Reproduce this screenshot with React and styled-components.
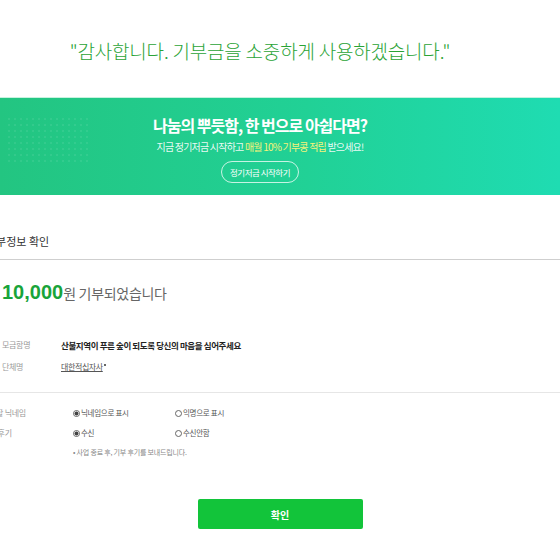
import React from "react";
import styled, { createGlobalStyle } from "styled-components";

const GlobalStyle = createGlobalStyle`
  body {
    margin: 0;
    background: #fff;
    font-family: "Noto Sans CJK KR", "Noto Sans", sans-serif;
  }
`;

const Page = styled.div`
  width: 560px;
  height: 560px;
  overflow: hidden;
  display: flex;
  flex-direction: column;
`;

const Thanks = styled.div`
  height: 97px;
  padding: 3px 40px 0 0;
  box-sizing: border-box;
  display: flex;
  align-items: center;
  justify-content: center;
  font-size: 19px;
  font-weight: 300;
  letter-spacing: -0.2px;
  color: #2aa336;
`;

const Banner = styled.div`
  position: relative;
  height: 98px;
  box-sizing: border-box;
  padding: 17px 40px 0 0;
  border-top: 1px solid #c6f3df;
  background: linear-gradient(90deg, #23c581 0%, #21d196 55%, #1fdcb2 100%);
  display: flex;
  flex-direction: column;
  align-items: center;
  color: #fff;

  &::before {
    content: "";
    position: absolute;
    left: 6px;
    top: 18px;
    width: 84px;
    height: 46px;
    background-image: radial-gradient(rgba(255, 255, 255, 0.07) 1px, transparent 1.4px);
    background-size: 6px 6px;
  }
`;

const BannerTitle = styled.div`
  font-size: 16px;
  line-height: 20px;
  font-weight: 700;
  letter-spacing: -1px;
`;

const BannerSub = styled.div`
  margin-top: 5px;
  font-size: 10px;
  line-height: 14px;
  letter-spacing: -0.8px;
  color: rgba(255, 255, 255, 0.92);
`;

const Highlight = styled.span`
  color: #f6f37a;
`;

const BannerButton = styled.button`
  margin-top: 7px;
  width: 78px;
  height: 22px;
  border: 1px solid rgba(255, 255, 255, 0.75);
  border-radius: 11px;
  background: transparent;
  color: #fff;
  font-family: inherit;
  font-size: 8.5px;
  letter-spacing: -0.5px;
  padding: 0;
`;

const Content = styled.div`
  margin-left: -18px;
  width: 600px;
  display: flex;
  flex-direction: column;
`;

const SectionHead = styled.div`
  padding: 39px 0 11px 4px;
  line-height: 14px;
  font-size: 11px;
  color: #333;
  border-bottom: 1px solid #cfcfcf;
`;

const Amount = styled.div`
  margin-top: 20px;
  padding-left: 20px;
  line-height: 24px;
  display: flex;
  align-items: baseline;
`;

const Money = styled.span`
  font-family: "Liberation Sans", Arial, sans-serif;
  font-weight: 700;
  font-size: 20px;
  color: #19a43a;
`;

const AmountText = styled.span`
  font-size: 14px;
  letter-spacing: -0.3px;
  color: #666;
`;

const InfoList = styled.div`
  margin-top: 33px;
  padding: 0 0 18px 20px;
  display: flex;
  flex-direction: column;
  gap: 8px;
  border-bottom: 1px solid #e6e6e6;
`;

const Row = styled.div`
  display: flex;
  align-items: center;
  height: 14px;
  line-height: 14px;
`;

const Label = styled.div`
  width: ${(p) => p.$w}px;
  flex-shrink: 0;
  font-size: 8px;
  letter-spacing: -0.3px;
  color: #999;
`;

const Value = styled.div`
  font-size: 8.5px;
  font-weight: 700;
  letter-spacing: -0.4px;
  color: #222;
`;

const OrgLink = styled.a`
  font-size: 8px;
  letter-spacing: -0.4px;
  color: #555;
  text-decoration: underline;
`;

const Arrow = styled.span`
  margin: 0 0 4px 1px;
  width: 2px;
  height: 2px;
  border-radius: 50%;
  background: #333;
`;

const Options = styled.div`
  padding-top: 13px;
  display: flex;
  flex-direction: column;
  gap: 6px;
`;

const Option = styled.label`
  width: ${(p) => p.$w || 102}px;
  display: flex;
  align-items: center;
  font-size: 7.5px;
  letter-spacing: -0.3px;
  color: #555;
`;

const Radio = styled.span`
  width: 7px;
  height: 7px;
  box-sizing: border-box;
  border-radius: 50%;
  border: 1px solid #666;
  margin-right: 1px;
  flex-shrink: 0;
  background: ${(p) => (p.$on ? "radial-gradient(#444 0 1.8px, #fff 2.2px)" : "#fff")};
`;

const Note = styled.div`
  padding-left: 91px;
  line-height: 12px;
  font-size: 7px;
  letter-spacing: -0.2px;
  color: #888;
`;

const Footer = styled.div`
  margin-top: 41px;
  display: flex;
  justify-content: center;
`;

const Confirm = styled.button`
  width: 165px;
  height: 30px;
  border: 0;
  border-radius: 2px;
  background: #12c43a;
  color: #fff;
  font-family: inherit;
  font-size: 10px;
  font-weight: 700;
`;

export default function App() {
  return (
    <Page>
      <GlobalStyle />
      <Thanks>"감사합니다. 기부금을 소중하게 사용하겠습니다."</Thanks>
      <Banner>
        <BannerTitle>나눔의 뿌듯함, 한 번으로 아쉽다면?</BannerTitle>
        <BannerSub>
          지금 정기저금 시작하고 <Highlight>매월 10% 기부콩 적립</Highlight> 받으세요!
        </BannerSub>
        <BannerButton>정기저금 시작하기</BannerButton>
      </Banner>
      <Content>
        <SectionHead>기부정보 확인</SectionHead>
        <Amount>
          <Money>10,000</Money>
          <AmountText>원 기부되었습니다</AmountText>
        </Amount>
        <InfoList>
          <Row>
            <Label $w={59}>모금함명</Label>
            <Value>산불지역이 푸른 숲이 되도록 당신의 마음을 심어주세요</Value>
          </Row>
          <Row>
            <Label $w={59}>단체명</Label>
            <OrgLink>대한적십자사</OrgLink>
            <Arrow />
          </Row>
        </InfoList>
        <Options>
          <Row>
            <Label $w={91}>표시할 닉네임</Label>
            <Option>
              <Radio $on />
              닉네임으로 표시
            </Option>
            <Option>
              <Radio />
              익명으로 표시
            </Option>
          </Row>
          <Row>
            <Label $w={91}>기부 후기</Label>
            <Option>
              <Radio $on />
              수신
            </Option>
            <Option>
              <Radio />
              수신안함
            </Option>
          </Row>
          <Note>• 사업 종료 후, 기부 후기를 보내드립니다.</Note>
        </Options>
      </Content>
      <Footer>
        <Confirm>확인</Confirm>
      </Footer>
    </Page>
  );
}
